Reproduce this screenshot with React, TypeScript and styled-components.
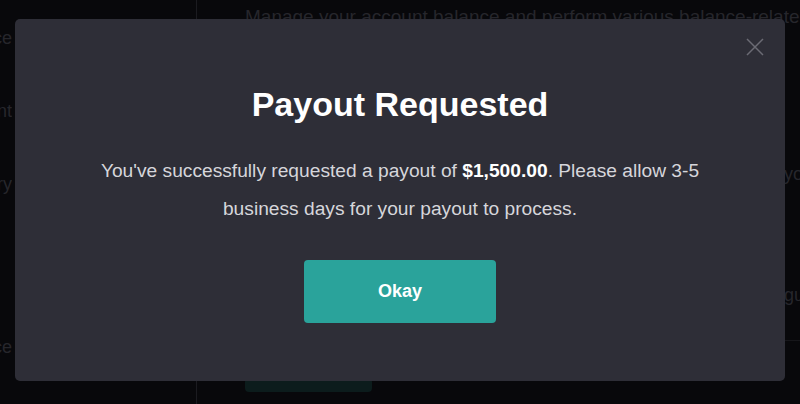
import React from 'react'
import styled, { createGlobalStyle } from 'styled-components'

const GlobalStyle = createGlobalStyle`
    html, body {
        margin: 0;
        padding: 0;
        background: #08080b;
        font-family: "Liberation Sans", Arial, sans-serif;
    }
`

const Page = styled.div`
    position: relative;
    width: 800px;
    height: 404px;
    overflow: hidden;
    display: flex;
    background: #08080b;
`

const SideStrip = styled.nav`
    flex-shrink: 0;
    width: 12px;
    overflow: hidden;
    display: flex;
    flex-direction: column;
    align-items: flex-end;
    padding-top: 28px;
    gap: 52px;
`

const SideItem = styled.span<{ $gap?: number }>`
    white-space: nowrap;
    font-size: 18px;
    color: #26262c;
    margin-top: ${(p) => p.$gap ?? 0}px;
`

const Sidebar = styled.div`
    flex-shrink: 0;
    width: 184px;
    border-right: 1px solid #1b1b20;
`

const Main = styled.main`
    flex: 1;
    min-width: 0;
    padding: 6px 0 0 48px;
    display: flex;
    flex-direction: column;
`

const Lead = styled.p`
    margin: 0;
    white-space: nowrap;
    font-size: 19px;
    color: #26262c;
`

const GhostButton = styled.div`
    margin-top: auto;
    margin-bottom: 12px;
    width: 127px;
    height: 14px;
    border-radius: 4px;
    background: #0c1c1c;
`

const Overlay = styled.div`
    position: absolute;
    inset: 0;
    display: flex;
    justify-content: center;
    align-items: flex-start;
    padding-top: 19px;
`

const Modal = styled.div`
    position: relative;
    width: 770px;
    height: 362px;
    box-sizing: border-box;
    background: #2e2e37;
    border-radius: 5px;
    padding-top: 67px;
    display: flex;
    flex-direction: column;
    align-items: center;
    text-align: center;
`

const CloseButton = styled.button`
    position: absolute;
    top: 18px;
    right: 20px;
    width: 20px;
    height: 20px;
    padding: 0;
    border: 0;
    background: none;
    display: flex;
    align-items: center;
    justify-content: center;
`

const Title = styled.h2`
    margin: 0;
    font-size: 34px;
    line-height: 36px;
    font-weight: 700;
    color: #ffffff;
`

const Message = styled.p`
    margin: 30px 0 0;
    max-width: 640px;
    font-size: 19.2px;
    line-height: 38px;
    color: #d6d6db;

    strong {
        color: #ffffff;
        font-weight: 700;
    }
`

const PrimaryButton = styled.button`
    margin-top: 32px;
    width: 192px;
    height: 63px;
    border: 0;
    border-radius: 4px;
    background: #2aa39b;
    color: #ffffff;
    font-family: inherit;
    font-size: 18px;
    font-weight: 700;
`

const Edge = styled.div`
    position: absolute;
    right: 0;
    top: 0;
    width: 16px;
    height: 100%;
    display: flex;
    flex-direction: column;
    padding-top: 164px;
    box-sizing: border-box;
`

const EdgeText = styled.span<{ $gap?: number }>`
    font-size: 18px;
    color: #26262c;
    white-space: nowrap;
    margin-top: ${(p) => p.$gap ?? 0}px;
`

const EdgeLine = styled.div`
    margin-top: 34px;
    border-top: 1px solid #16161a;
`

export default function App() {
    return (
        <>
            <GlobalStyle />
            <Page>
                <SideStrip>
                    <SideItem>Balance</SideItem>
                    <SideItem>Payment</SideItem>
                    <SideItem>History</SideItem>
                    <SideItem $gap={90}>Invoice</SideItem>
                </SideStrip>
                <Sidebar />
                <Main>
                    <Lead>Manage your account balance and perform various balance-related actions</Lead>
                    <GhostButton />
                </Main>
                <Edge>
                    <EdgeText>you</EdgeText>
                    <EdgeText $gap={100}>gu</EdgeText>
                    <EdgeLine />
                </Edge>
                <Overlay>
                    <Modal>
                        <CloseButton aria-label="Close">
                            <svg width="18" height="18" viewBox="0 0 18 18">
                                <path d="M1 1L17 17M17 1L1 17" stroke="#6b6b74" strokeWidth="1.5" />
                            </svg>
                        </CloseButton>
                        <Title>Payout Requested</Title>
                        <Message>
                            You've successfully requested a payout of <strong>$1,500.00</strong>. Please allow 3-5 business days for your payout to process.
                        </Message>
                        <PrimaryButton>Okay</PrimaryButton>
                    </Modal>
                </Overlay>
            </Page>
        </>
    )
}
